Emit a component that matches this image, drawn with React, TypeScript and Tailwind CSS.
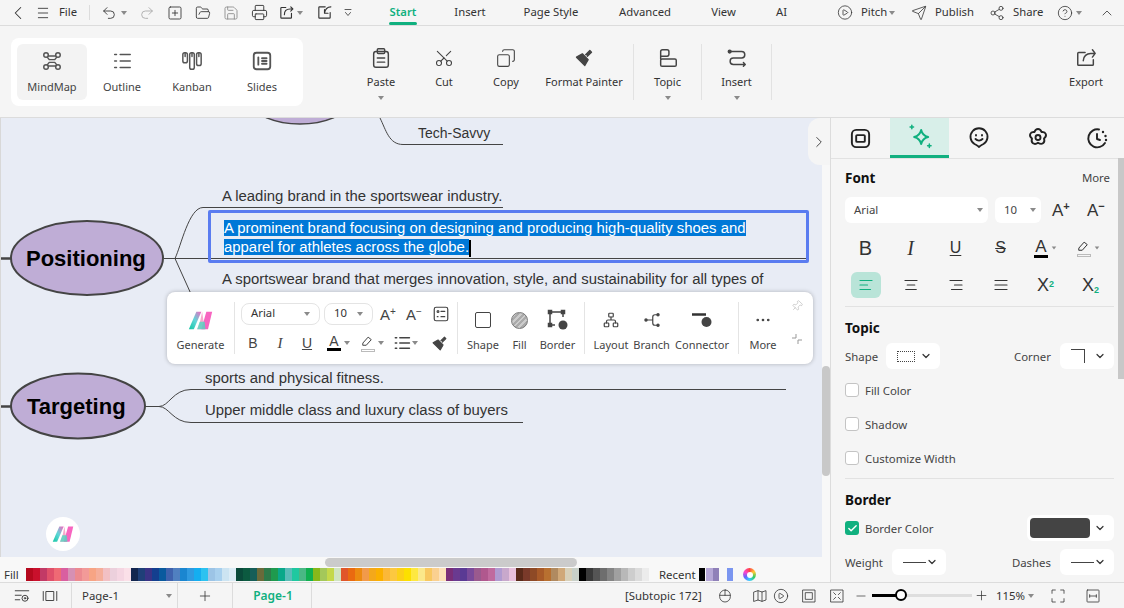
import type { ReactNode } from "react";
import {
  ChevronLeft, ChevronRight, ChevronUp, ChevronDown, Undo2, Redo2, SquarePlus, FolderOpen, Save, Printer,
  CirclePlay, Send, Share2, CircleHelp, Scissors, Copy, Plus, Minus, Check, MoreHorizontal, Pin,
} from "lucide-react";

const reds = ["#b5091e", "#c9102c", "#c23a66", "#e0506a", "#ef6a74", "#d95fa0", "#d690b4", "#ec8a90", "#f29a98", "#f7a484", "#f5ae9a", "#f2c0c4", "#ecd0dc", "#f5d6e2", "#fbe0e8"];
const blues = ["#13264f", "#1f3f78", "#3a3385", "#143f8f", "#0a5a9e", "#3f62ad", "#5080c0", "#1a86d0", "#2f9ae0", "#14aef0", "#2cc2f0", "#9cc4e6", "#a8d0ee", "#cce4f2", "#dcecf6"];
const greens = ["#0a4a3a", "#0c5a40", "#175e58", "#6a6a3a", "#2e7a4a", "#1f9a4e", "#0aa88a", "#5abcb8", "#1fc8a0", "#4ab884", "#10b050", "#88b81a", "#a4c85a", "#c4d84a", "#d0e4c0"];
const oranges = ["#e0552a", "#ea6a10", "#ec8a10", "#f29a4a", "#f4a81a", "#fbb000", "#fbb838", "#fcc840", "#fcd018", "#fce000", "#fee840", "#fbe88a", "#f8c860", "#fad090", "#fce0b8"];
const purples = ["#7a2e78", "#6a3a90", "#5a3a94", "#7a4a9a", "#9a5a8e", "#b0588e", "#c06a9e", "#b09ad0", "#c8a8cc", "#e8c0dc"];
const browns = ["#5a2a1a", "#7a3a2a", "#8e4a26", "#a85a28", "#b87030", "#b08a60", "#d0a878", "#d8d0b8", "#c8d0c8"];
const greys = ["#000000", "#3a3a3a", "#555555", "#6e6e6e", "#858585", "#a0a0a0", "#b8b8b8", "#cdcdcd", "#dcdcdc", "#ececec"];
const palette = [...reds, ...blues, ...greens, ...oranges, ...purples, ...browns, ...greys];

function Ic({ s = 20, children }: { s?: number; children: ReactNode }) {
  return (
    <svg width={s} height={s} viewBox="0 0 24 24" fill="none" stroke="currentColor" strokeWidth="1.6" strokeLinecap="round" strokeLinejoin="round" className="shrink-0">
      {children}
    </svg>
  );
}

function Caret({ className = "" }: { className?: string }) {
  return <span className={`block w-0 h-0 shrink-0 border-x-[3.5px] border-x-transparent border-t-[4px] border-t-[#8a8a8a] ${className}`} />;
}

function Logo({ s = 30, id }: { s?: number; id: string }) {
  return (
    <svg width={s} height={s * 0.8} viewBox="0 0 30 24" className="shrink-0">
      <defs>
        <linearGradient id={id} x1="0" y1="1" x2="1" y2="0">
          <stop offset="0" stopColor="#13c6a3" />
          <stop offset="0.5" stopColor="#5fd6d8" />
          <stop offset="1" stopColor="#f765c0" />
        </linearGradient>
      </defs>
      <polygon points="1,23 10,2 16,2 7,23" fill={`url(#${id})`} />
      <polygon points="11,23 14,16 17,2 20,23" fill="#f7a0c8" opacity="0.9" />
      <polygon points="16,23 22,2 29,2 24,23" fill="#f765c0" />
      <polygon points="11,23 14,14 20,14 21,23" fill="#4fd8c0" opacity="0.8" />
    </svg>
  );
}

function TopBar() {
  return (
    <div className="flex items-center h-[26px] shrink-0 bg-[#f5f5f5] border-b border-[#dcdcdc] text-[11.3px] text-[#333]">
      <div className="w-[36px] flex justify-center"><ChevronLeft size={22} strokeWidth={1.1} /></div>
      <div className="w-[14px] flex justify-center">
        <Ic s={16}><path d="M5 5h14M5 12h14M5 19h14" strokeWidth="1.300" /></Ic>
      </div>
      <span className="ml-[9px] w-[30px]">File</span>
      <span className="w-px h-[15px] bg-[#dcdcdc]" />
      <div className="ml-[7px] w-[24px] flex justify-center"><Undo2 size={16} strokeWidth={1.3} /></div>
      <div className="w-[5px] flex justify-center"><Caret /></div>
      <div className="ml-[7px] w-[28px] flex justify-center text-[#a8a8a8]"><Redo2 size={16} strokeWidth={1.3} /></div>
      <div className="w-[28px] flex justify-center"><SquarePlus size={16} strokeWidth={1.3} /></div>
      <div className="w-[28px] flex justify-center"><FolderOpen size={16} strokeWidth={1.3} /></div>
      <div className="w-[28px] flex justify-center text-[#8a8a8a]"><Save size={16} strokeWidth={1.3} /></div>
      <div className="w-[28px] flex justify-center"><Printer size={17} strokeWidth={1.3} /></div>
      <div className="w-[26px] flex justify-center">
        <Ic s={17}><path d="M19 13v6a1 1 0 0 1-1 1H5a1 1 0 0 1-1-1V6a1 1 0 0 1 1-1h6" /><path d="M9 15c0-5 3-8 8-8h4M18 4l3 3-3 3" /></Ic>
      </div>
      <div className="w-[2px] flex justify-center"><Caret /></div>
      <div className="w-[46px] flex justify-center">
        <Ic s={17}><path d="M20 12v7a1 1 0 0 1-1 1H5a1 1 0 0 1-1-1V5a1 1 0 0 1 1-1h8" /><path d="M21 4c-5 0-8 3-9 9M12 8v5h5" /></Ic>
      </div>
      <div className="w-[2px] flex justify-center">
        <Ic s={12}><path d="M6 5h12M7 11l5 6 5-6" /></Ic>
      </div>

      <div className="ml-[40px] w-[28px] relative h-full flex items-center justify-center">
        <span className="text-[#10b07f] font-semibold">Start</span>
        <span className="absolute bottom-0 left-0 right-0 h-[3px] rounded-sm bg-[#10b07f]" />
      </div>
      <span className="ml-[32px] w-[42px] text-center">Insert</span>
      <span className="ml-[23px] w-[74px] text-center">Page Style</span>
      <span className="ml-[20px] w-[74px] text-center">Advanced</span>
      <span className="ml-[19px] w-[45px] text-center">View</span>
      <span className="ml-[25px] w-[21px] text-center">AI</span>

      <div className="ml-[45px] w-[16px] flex justify-center"><CirclePlay size={17} strokeWidth={1.2} /></div>
      <span className="ml-[8px] w-[26px]">Pitch</span>
      <div className="w-[10px] flex justify-center"><Caret /></div>
      <div className="ml-[14px] w-[16px] flex justify-center"><Send size={16} strokeWidth={1.2} /></div>
      <span className="ml-[8px] w-[39px]">Publish</span>
      <div className="ml-[15px] w-[16px] flex justify-center"><Share2 size={16} strokeWidth={1.2} /></div>
      <span className="ml-[8px] w-[30px]">Share</span>
      <div className="ml-[14px] w-[16px] flex justify-center"><CircleHelp size={16} strokeWidth={1.2} /></div>
      <div className="ml-[1px] w-[10px] flex justify-center"><Caret /></div>
      <div className="ml-[15px] w-[16px] flex justify-center"><ChevronUp size={18} strokeWidth={1.2} /></div>
    </div>
  );
}

function ViewItem({ label, active, children }: { label: string; active?: boolean; children: ReactNode }) {
  return (
    <div className={`w-[70px] h-[56px] rounded-md flex flex-col items-center text-[11px] text-[#444] ${active ? "bg-[#f3f3f3]" : ""}`}>
      <div className="h-[32px] mt-[1px] flex items-center justify-center text-[#555]">{children}</div>
      <span className="mt-[2px]">{label}</span>
    </div>
  );
}

function Tool({ w, label, caret, children }: { w: string; label: string; caret?: boolean; children: ReactNode }) {
  return (
    <div className={`${w} shrink-0 flex flex-col items-center text-[11px] text-[#333]`}>
      <div className="h-[24px] mt-[20px] flex items-center justify-center text-[#444]">{children}</div>
      <span className="mt-[3px] leading-[18px]">{label}</span>
      {caret && <Caret className="mt-[5px]" />}
    </div>
  );
}

function Ribbon() {
  return (
    <div className="flex h-[92px] shrink-0 bg-[#f5f5f5] border-b border-[#dcdcdc]">
      <div className="ml-[11px] mt-[12px] w-[292px] h-[68px] bg-white rounded-lg p-[6px] flex shrink-0">
        <ViewItem label="MindMap" active>
          <Ic s={22}>
            <circle cx="5.500" cy="5.500" r="2.500" /><circle cx="18.500" cy="5.500" r="2.500" /><circle cx="5.500" cy="18.500" r="2.500" /><circle cx="18.500" cy="18.500" r="2.500" />
            <path d="M8 6.500 16 6.500M8 17.500h8M7 8l2 2.500h6l2-2.500M7 16l2-2.500h6l2 2.500" />
          </Ic>
        </ViewItem>
        <ViewItem label="Outline">
          <Ic s={22}><path d="M4 5h2M10 5h11M4 12h2M10 12h11M4 19h2M10 19h11" /></Ic>
        </ViewItem>
        <ViewItem label="Kanban">
          <Ic s={22}><rect x="2" y="3" width="5" height="11" rx="2" /><rect x="9.500" y="3" width="5" height="18" rx="2" /><rect x="17" y="3" width="5" height="14" rx="2" /><path d="M4.500 3v4M12 3v4M19.500 3v4" /></Ic>
        </ViewItem>
        <ViewItem label="Slides">
          <Ic s={22}><rect x="3" y="3" width="18" height="18" rx="3" strokeWidth="2" /><path d="M8 8v8M12 9h5M12 15h5M12 12h5" strokeWidth="2" /></Ic>
        </ViewItem>
      </div>
      <div className="ml-[48px] flex">
        <Tool w="w-[60px]" label="Paste" caret>
          <Ic s={22}><rect x="4" y="5" width="16" height="17" rx="2.500" /><rect x="8" y="2" width="8" height="5" rx="1" /><path d="M8 12h8M8 16.500h8" /></Ic>
        </Tool>
        <Tool w="w-[66px]" label="Cut"><Scissors size={20} strokeWidth={1.3} className="-rotate-90" /></Tool>
        <Tool w="w-[58px]" label="Copy"><Copy size={20} strokeWidth={1.3} className="-scale-x-100" /></Tool>
        <Tool w="w-[98px]" label="Format Painter">
          <Ic s={20}><path d="M3 11l10 10 4-7-7-7z" fill="currentColor" /><path d="M14 8l5-5 2 2-5 5" fill="currentColor" /></Ic>
        </Tool>
        <span className="w-px h-[56px] mt-[18px] bg-[#e2e2e2]" />
        <Tool w="w-[67px]" label="Topic" caret>
          <Ic s={22}><path d="M4 13V5a2 2 0 0 1 2-2h5a2 2 0 0 1 2 2v3a2 2 0 0 1-2 2H4" /><rect x="4" y="13" width="17" height="8" rx="1.500" /></Ic>
        </Tool>
        <span className="w-px h-[56px] mt-[18px] bg-[#e2e2e2]" />
        <Tool w="w-[69px]" label="Insert" caret>
          <Ic s={22}><circle cx="4" cy="5" r="1.500" fill="currentColor" /><path d="M5 5h12a3 3 0 0 1 0 7H8a3 3 0 0 0 0 7h12M19 17l2 2-2 2" /></Ic>
        </Tool>
        <span className="w-px h-[56px] mt-[18px] bg-[#e2e2e2]" />
      </div>
      <div className="ml-auto">
        <Tool w="w-[76px]" label="Export">
          <Ic s={22}><path d="M20 14v5a1 1 0 0 1-1 1H4a1 1 0 0 1-1-1V7a1 1 0 0 1 1-1h7" /><path d="M9 15c0-5 4-8 8-8h5M19 3l3 4-3 4" /></Ic>
        </Tool>
      </div>
    </div>
  );
}

function PopSelect({ w, label }: { w: string; label: string }) {
  return (
    <div className={`${w} h-[22px] px-[9px] flex items-center justify-between border border-[#e4e4e4] rounded-lg text-[11.3px] text-[#333]`}>
      <span className="-mt-[1px]">{label}</span>
      <Caret />
    </div>
  );
}

function PopTool({ w, label, children, className = "" }: { w: string; label: string; children: ReactNode; className?: string }) {
  return (
    <div className={`${w} shrink-0 flex flex-col items-center text-[11px] text-[#444] whitespace-nowrap ${className}`}>
      <div className="h-[22px] mt-[17px] flex items-center justify-center text-[#444]">{children}</div>
      <span className="mt-[6px] leading-[16px]">{label}</span>
    </div>
  );
}

function FloatBar() {
  return (
    <div className="absolute left-[166px] top-[174px] w-[646px] h-[72px] bg-white rounded-lg shadow-[0_0_4px_rgba(0,0,0,0.25)] flex font-['Noto_Sans',sans-serif]">
      <PopTool w="w-[67px]" label="Generate"><Logo s={25} id="gen" /></PopTool>
      <span className="w-px h-[52px] mt-[10px] bg-[#e4e4e4]" />
      <div className="w-[222px] shrink-0 pl-[6px] pt-[11px]">
        <div className="flex items-center h-[22px] text-[#444]">
          <PopSelect w="w-[79px]" label="Arial" />
          <PopSelect w="ml-[4px] w-[49px]" label="10" />
          <span className="ml-[7px] w-[20px] text-[15px] leading-none font-['Liberation_Sans',sans-serif]">A<sup className="text-[10px]">+</sup></span>
          <span className="ml-[6px] w-[20px] text-[15px] leading-none font-['Liberation_Sans',sans-serif]">A<sup className="text-[10px]">−</sup></span>
          <span className="ml-[6px]">
            <Ic s={18}><rect x="3" y="3" width="18" height="18" rx="2.500" /><circle cx="8" cy="8.500" r="1.200" /><path d="M12 8.500h5M7 15.500h1M12 15.500h5" /></Ic>
          </span>
        </div>
        <div className="flex items-center h-[22px] mt-[7px] text-[#444] font-['Liberation_Sans',sans-serif]">
          <span className="ml-[6px] w-[12px] text-center text-[14px]">B</span>
          <span className="ml-[15px] w-[12px] text-center text-[15px] italic font-['Liberation_Serif',serif]">I</span>
          <span className="ml-[15px] w-[12px] text-center text-[14px] underline">U</span>
          <div className="ml-[14px] w-[14px] flex flex-col items-center">
            <span className="text-[14px] leading-[13px]">A</span>
            <span className="w-[14px] h-[3px] bg-black" />
          </div>
          <Caret className="ml-[3px]" />
          <span className="ml-[10px] flex flex-col items-center">
            <Ic s={15}><path d="M5 14l8-9 5 4-8 9H5z" /></Ic>
            <span className="w-[14px] h-[3px] border border-[#bbb]" />
          </span>
          <Caret className="ml-[3px]" />
          <span className="ml-[9px]">
            <Ic s={18}><path d="M9 5h13M9 12h13M9 19h13M3 5h2M3 12h2M3 19h2" strokeWidth="1.800" /></Ic>
          </span>
          <Caret className="ml-[1px]" />
          <span className="ml-[13px]">
            <Ic s={17}><path d="M3 11l10 10 4-7-7-7z" fill="currentColor" /><path d="M14 8l5-5 2 2-5 5" fill="currentColor" /></Ic>
          </span>
        </div>
      </div>
      <span className="w-px h-[52px] mt-[10px] bg-[#e4e4e4]" />
      <PopTool w="w-[50px]" label="Shape"><span className="block w-[16px] h-[16px] border-[1.5px] border-[#444] rounded-[2px]" /></PopTool>
      <PopTool w="w-[23px]" label="Fill"><span className="block w-[17px] h-[17px] rounded-full border border-[#777] bg-[repeating-linear-gradient(135deg,#aaa_0_2px,#ccc_2px_4px)]" /></PopTool>
      <PopTool w="w-[53px]" label="Border">
        <svg width="22" height="22" viewBox="0 0 22 22" fill="none" stroke="#444" strokeWidth="1.500">
          <path d="M3 3h13M3 3v13M3 16h5M16 3v5" />
          <rect x="1.500" y="1.500" width="3" height="3" fill="#444" /><rect x="14.500" y="1.500" width="3" height="3" fill="#444" /><rect x="1.500" y="14.500" width="3" height="3" fill="#444" />
          <circle cx="16" cy="16" r="4.500" fill="#444" stroke="none" />
        </svg>
      </PopTool>
      <span className="w-px h-[52px] mt-[10px] bg-[#e4e4e4]" />
      <PopTool w="ml-[3px] w-[46px]" label="Layout">
        <Ic s={18}><rect x="9" y="3" width="6" height="5" rx="1" /><rect x="3" y="16" width="6" height="5" rx="1" /><rect x="15" y="16" width="6" height="5" rx="1" /><path d="M12 8v4M6 16v-2a2 2 0 0 1 2-2h8a2 2 0 0 1 2 2v2" /></Ic>
      </PopTool>
      <PopTool w="w-[35px]" label="Branch">
        <Ic s={18}><circle cx="4" cy="12" r="1.500" fill="currentColor" /><circle cx="20" cy="5" r="1.500" fill="currentColor" /><circle cx="20" cy="19" r="1.500" fill="currentColor" /><path d="M4 12h8M19 5h-3a3 3 0 0 0-3 3v8a3 3 0 0 0 3 3h3" /></Ic>
      </PopTool>
      <PopTool w="ml-[6px] w-[54px]" label="Connector">
        <svg width="22" height="16" viewBox="0 0 22 16"><path d="M1 2.500h14" stroke="#333" strokeWidth="2.500" fill="none" /><circle cx="15.500" cy="10" r="5" fill="#444" /></svg>
      </PopTool>
      <span className="ml-[9px] w-px h-[52px] mt-[10px] bg-[#e4e4e4]" />
      <PopTool w="w-[48px]" label="More"><MoreHorizontal size={18} strokeWidth={1.6} /></PopTool>
      <div className="w-[20px] flex flex-col items-center text-[#b5b5b5]">
        <span className="mt-[8px]"><Pin size={12} strokeWidth={1.2} className="rotate-45" /></span>
        <svg width="12" height="12" viewBox="0 0 12 12" fill="none" stroke="#999" strokeWidth="1" className="mt-[21px]"><path d="M1 5h4V1M7 11V7h4" /></svg>
      </div>
    </div>
  );
}

function Canvas() {
  return (
    <div className="relative flex-1 bg-[#e8ecf5] overflow-hidden border-l border-[#d8d8d8] font-['Liberation_Sans',sans-serif] text-[#333] text-[14.9px]">
      <svg width="823" height="439" className="absolute left-0 top-0">
        <g fill="none" stroke="#444" strokeWidth="1">
          <path d="M379 0C385 12 388 26.500 402 26.500H502" />
          <path d="M163 140.500H174C180 128 188 89.500 202 89.500H502" />
          <path d="M174 140.500H806" />
          <path d="M174 140.500L190 176" />
          <path d="M144 288.500H158C168 288.500 172 271.500 190 271.500H785" />
          <path d="M158 288.500C168 288.500 172 304.500 190 304.500H522" />
        </g>
        <path d="M0 140.500H10M0 288.500H10" stroke="#444" strokeWidth="2.500" />
        <ellipse cx="299" cy="-14" rx="46" ry="20" fill="#bfadd6" stroke="#444" strokeWidth="1.500" />
        <ellipse cx="86" cy="140" rx="76" ry="37" fill="#bfadd6" stroke="#444" strokeWidth="2" />
        <ellipse cx="77" cy="288" rx="67" ry="32.500" fill="#bfadd6" stroke="#444" strokeWidth="2" />
      </svg>

      <span className="absolute left-[417px] top-[5px] whitespace-nowrap text-[14px]">Tech-Savvy</span>
      <span className="absolute left-[221px] top-[67px] whitespace-nowrap">A leading brand in the sportswear industry.</span>
      <div className="absolute left-[207px] top-[92px] w-[601px] h-[53px] border-[3px] border-[#5a7cf0] rounded-[2px] pl-[13px] pt-[6px] leading-[19px] text-white whitespace-nowrap">
        <span className="bg-[#0078d7]">A prominent brand focusing on designing and producing high-quality shoes and</span>
        <br />
        <span className="bg-[#0078d7]">apparel for athletes across the globe.</span>
        <span className="inline-block w-[1.5px] h-[17px] bg-black align-middle" />
      </div>
      <span className="absolute left-[221px] top-[150px] whitespace-nowrap">A sportswear brand that merges innovation, style, and sustainability for all types of</span>
      <span className="absolute left-[204px] top-[249px] whitespace-nowrap">sports and physical fitness.</span>
      <span className="absolute left-[204px] top-[281px] whitespace-nowrap">Upper middle class and luxury class of buyers</span>

      <span className="absolute left-[25px] top-[127px] text-[22px] font-bold text-black leading-[28px]">Positioning</span>
      <span className="absolute left-[26px] top-[275px] text-[22px] font-bold text-black leading-[28px]">Targeting</span>

      <FloatBar />

      <div className="absolute left-[45px] top-[399px] w-[34px] h-[34px] rounded-full bg-white flex items-center justify-center">
        <Logo s={22} id="fab" />
      </div>
    </div>
  );
}

function PaletteRow() {
  return (
    <div className="relative h-[25px] shrink-0 bg-[#f8f8f8] font-['Noto_Sans',sans-serif] text-[11.4px] text-[#333]">
      <span className="absolute left-[325px] top-[1px] w-[252px] h-[9px] rounded-md bg-[#cbcbcb]" />
      <div className="absolute left-0 top-[10px] right-0 h-[15px] flex items-center">
        <span className="ml-[4px] w-[22px]">Fill</span>
        <div className="flex h-[13px]">
          {palette.map((c, i) => (
            <span key={i} className="block w-[7px] h-full" style={{ backgroundColor: c }} />
          ))}
        </div>
        <span className="ml-[10px] w-[40px]">Recent</span>
        <span className="w-[6px] h-[13px] bg-black" />
        <span className="ml-px w-[7px] h-[13px] bg-[#b5a7d6]" />
        <span className="w-[6px] h-[13px] bg-[#8f80b8]" />
        <span className="ml-[8px] w-[6px] h-[13px] bg-[#7b96f0]" />
        <span className="ml-[10px] w-[13px] h-[13px] rounded-full bg-[conic-gradient(#f44,#fc3,#3c6,#3cf,#66f,#f4c,#f44)] flex items-center justify-center">
          <span className="block w-[6px] h-[6px] rounded-full bg-white" />
        </span>
      </div>
    </div>
  );
}

function Dd({ w, children }: { w: string; children: ReactNode }) {
  return (
    <div className={`${w} h-[26px] bg-white rounded-md flex items-center justify-between pl-[11px] pr-[8px] shrink-0`}>
      {children}
      <ChevronDown size={12} strokeWidth={2.4} className="text-[#333] shrink-0" />
    </div>
  );
}

function CheckRow({ label }: { label: string }) {
  return (
    <div className="h-[34px] flex items-center text-[#444]">
      <span className="w-[14px] h-[14px] bg-white border border-[#c4c4c4] rounded-[3px]" />
      <span className="ml-[6px] mt-[1px]">{label}</span>
    </div>
  );
}

function SidePanel() {
  return (
    <div className="relative w-[294px] shrink-0 bg-[#f5f5f5] border-l border-[#dcdcdc] overflow-hidden font-['Noto_Sans',sans-serif] text-[11.4px] text-[#444]">
      <div className="flex h-[41px] border-b border-[#e2e2e2] text-[#222]">
        <div className="w-[59px] shrink-0 flex items-center justify-center">
          <Ic s={23}><rect x="3" y="3" width="18" height="18" rx="4.500" strokeWidth="2" /><rect x="7.500" y="8.500" width="9" height="7" rx="1" strokeWidth="2" /></Ic>
        </div>
        <div className="w-[59px] shrink-0 h-[40px] flex items-center justify-center bg-[#d8efe9] border-b-[3px] border-[#10b07f] text-[#10b07f]">
          <Ic s={28}><path d="M13 6c.8 3.500 2.500 5.200 6 6-3.500.8-5.200 2.500-6 6-.8-3.500-2.500-5.200-6-6 3.500-.8 5.200-2.500 6-6z" strokeWidth="1.700" /><path d="M5 2v3M3.500 3.500h3M20 18v3M18.500 19.500h3" strokeWidth="1.300" /></Ic>
        </div>
        <div className="w-[59px] shrink-0 flex items-center justify-center">
          <Ic s={24}><path d="M12 21c-1-1.500-2.500-2-4.500-3A8.500 8.500 0 1 1 16.500 18c-2 1-3.500 1.500-4.500 3z" strokeWidth="1.900" /><path d="M9 9v.5M15 9v.5M8.500 13c2 2 5 2 7 0" strokeWidth="1.900" /></Ic>
        </div>
        <div className="w-[59px] shrink-0 flex items-center justify-center">
          <Ic s={24}><path d="M12 3c2 0 3 1.500 3.500 3 1.500-.2 3.500 0 4.300 2 .7 2-.5 3.500-1.800 4.500.5 1.500.8 3.500-1 4.800-1.700 1.200-3.500.4-5-.6-1.300 1-3.200 1.800-5 .6-1.700-1.300-1.500-3.300-1-4.800C4.700 11.500 3.500 10 4.200 8c.8-2 2.800-2.200 4.300-2C9 4.500 10 3 12 3z" strokeWidth="1.900" /><circle cx="12" cy="11.500" r="2.500" strokeWidth="1.900" /></Ic>
        </div>
        <div className="w-[59px] shrink-0 flex items-center justify-center">
          <Ic s={24}><path d="M14 3.500A9 9 0 1 0 20 17" strokeWidth="1.900" /><path d="M12 8v5l3 1" strokeWidth="1.900" /><path d="M18 6v.1M20.500 10v.1M21 14v.1" strokeWidth="2.400" /></Ic>
        </div>
      </div>

      <div className="pl-[14px] pr-[10px]">
        <div className="h-[38px] flex items-center justify-between">
          <span className="text-[13.5px] font-bold text-[#111]">Font</span>
          <span className="mr-[4px] text-[#444]">More</span>
        </div>
        <div className="flex items-center h-[26px]">
          <div className="w-[143px] h-[26px] bg-white rounded-md pl-[9px] pr-[5px] flex items-center justify-between">
            <span>Arial</span><Caret />
          </div>
          <div className="ml-[7px] w-[46px] h-[26px] bg-white rounded-md pl-[9px] pr-[5px] flex items-center justify-between">
            <span>10</span><Caret />
          </div>
          <span className="ml-[11px] w-[22px] text-[17px] leading-none font-['Liberation_Sans',sans-serif] text-[#333]">A<sup className="text-[11px] font-bold">+</sup></span>
          <span className="ml-[13px] w-[22px] text-[17px] leading-none font-['Liberation_Sans',sans-serif] text-[#333]">A<sup className="text-[11px] font-bold">−</sup></span>
        </div>

        <div className="-ml-[2px] mt-[12px] flex items-center h-[26px] font-['Liberation_Sans',sans-serif] text-[#333]">
          <span className="w-[45px] text-center text-[20px]">B</span>
          <span className="w-[45px] text-center text-[20px] italic font-['Liberation_Serif',serif]">I</span>
          <span className="w-[45px] text-center text-[16px] underline underline-offset-2">U</span>
          <span className="w-[45px] text-center text-[16px] line-through">S</span>
          <span className="w-[45px] flex items-center justify-center">
            <span className="flex flex-col items-center">
              <span className="text-[17px] leading-[16px]">A</span>
              <span className="w-[14px] h-[3px] bg-black" />
            </span>
            <Caret className="ml-[3px] scale-75" />
          </span>
          <span className="w-[40px] flex items-center justify-center">
            <span className="flex flex-col items-center">
              <Ic s={15}><path d="M5 14l8-9 5 4-8 9H5z" /></Ic>
              <span className="w-[14px] h-[3px] border border-[#bbb]" />
            </span>
            <Caret className="ml-[3px] scale-75" />
          </span>
        </div>

        <div className="-ml-[2px] mt-[11px] flex items-center h-[26px] font-['Liberation_Sans',sans-serif] text-[#333]">
          <span className="w-[45px] flex justify-center">
            <span className="w-[30px] h-[26px] rounded-md bg-[#b9e4d8] flex items-center justify-center text-[#10b07f]">
              <Ic s={18}><path d="M4 6h16M4 12h10M4 18h14" /></Ic>
            </span>
          </span>
          <span className="w-[45px] flex justify-center"><Ic s={18}><path d="M4 6h16M7 12h10M5 18h14" /></Ic></span>
          <span className="w-[45px] flex justify-center"><Ic s={18}><path d="M4 6h16M10 12h10M6 18h14" /></Ic></span>
          <span className="w-[45px] flex justify-center"><Ic s={18}><path d="M4 6h16M4 12h16M4 18h16" /></Ic></span>
          <span className="w-[45px] text-center text-[18px] leading-none">X<sup className="text-[9px] font-bold text-[#10b07f]">2</sup></span>
          <span className="w-[45px] text-center text-[18px] leading-none">X<sub className="text-[9px] font-bold text-[#10b07f]">2</sub></span>
        </div>

        <div className="mt-[8px] h-px bg-[#e2e2e2]" />
        <div className="pt-[11px] h-[31px] text-[13.5px] font-bold text-[#111] leading-[20px]">Topic</div>
        <div className="mt-[5px] flex items-center h-[26px]">
          <span className="w-[41px] mt-[2px]">Shape</span>
          <Dd w="w-[54px]"><span className="block w-[18px] h-[11px] border border-dotted border-[#444]" /></Dd>
          <span className="ml-auto mr-[9px] mt-[2px]">Corner</span>
          <Dd w="w-[54px]"><span className="block w-[14px] h-[14px] border-t border-r border-[#444]" /></Dd>
        </div>
        <div className="mt-[4px]">
          <CheckRow label="Fill Color" />
          <CheckRow label="Shadow" />
          <CheckRow label="Customize Width" />
        </div>
        <div className="mt-[3px] h-px bg-[#e2e2e2]" />
        <div className="pt-[11px] h-[31px] text-[13.5px] font-bold text-[#111] leading-[20px]">Border</div>
        <div className="mt-[5px] flex items-center h-[26px]">
          <span className="w-[14px] h-[14px] rounded-[3px] bg-[#10b07f] flex items-center justify-center">
            <Check size={11} strokeWidth={3} className="text-white" />
          </span>
          <span className="ml-[6px] mt-[2px]">Border Color</span>
          <div className="ml-auto w-[87px] h-[26px] bg-white rounded-md flex items-center pl-[3px] pr-[8px] justify-between">
            <span className="w-[60px] h-[20px] rounded-[4px] bg-[#444]" />
            <ChevronDown size={12} strokeWidth={2.4} className="text-[#333]" />
          </div>
        </div>
        <div className="mt-[8px] flex items-center h-[26px]">
          <span className="w-[47px] mt-[2px]">Weight</span>
          <Dd w="w-[54px]"><span className="block w-[24px] h-px bg-[#444]" /></Dd>
          <span className="ml-auto mr-[9px] mt-[2px]">Dashes</span>
          <Dd w="w-[54px]"><span className="block w-[24px] h-px bg-[#444]" /></Dd>
        </div>
      </div>

      <span className="absolute right-0 top-[40px] w-[6px] h-[221px] bg-[#c8c8c8]" />
    </div>
  );
}

function StatusBar() {
  return (
    <div className="flex items-center h-[26px] shrink-0 bg-[#f5f5f5] border-t border-[#dcdcdc] text-[11.4px] text-[#333]">
      <div className="w-[42px] flex justify-center pl-[2px]">
        <Ic s={18}><path d="M3 5h18M3 11h8M3 17h6" strokeWidth="1.200" /><circle cx="16" cy="15" r="4" strokeWidth="1.200" /><circle cx="16" cy="15" r="1" strokeWidth="1.200" /></Ic>
      </div>
      <div className="w-[16px] flex justify-center">
        <Ic s={18}><path d="M3 6v12M21 6v12" strokeWidth="1.200" /><rect x="7" y="6" width="10" height="12" strokeWidth="1.200" /></Ic>
      </div>
      <span className="ml-[13px] w-px h-[25px] bg-[#dcdcdc]" />
      <span className="ml-[10px] w-[84px]">Page-1</span>
      <Caret />
      <span className="ml-[5px] w-px h-[25px] bg-[#dcdcdc]" />
      <div className="w-[54px] flex justify-center"><Plus size={16} strokeWidth={1.2} /></div>
      <span className="w-px h-[25px] bg-[#dcdcdc]" />
      <span className="w-[78px] pl-[2px] text-center text-[12px] font-semibold text-[#10b07f]">Page-1</span>
      <span className="w-px h-[25px] bg-[#dcdcdc]" />
      <span className="ml-[313px] w-[79px] whitespace-nowrap">[Subtopic 172]</span>
      <div className="ml-[13px] w-[16px] flex justify-center">
        <Ic s={16}><rect x="4" y="3" width="16" height="18" rx="8" strokeWidth="1.200" /><path d="M4 11h16M12 3v8" strokeWidth="1.200" /></Ic>
      </div>
      <div className="ml-[19px] w-[16px] flex justify-center">
        <Ic s={16}><path d="M3 6l6-2 6 2 6-2v14l-6 2-6-2-6 2zM9 4v14M15 6v14" strokeWidth="1.200" /></Ic>
      </div>
      <div className="ml-[5px] w-[16px] flex justify-center"><CirclePlay size={16} strokeWidth={1.2} /></div>
      <div className="ml-[12px] w-[16px] flex justify-center">
        <Ic s={16}><path d="M3 3h18v18H3z" strokeWidth="1.200" /><rect x="7" y="7" width="10" height="10" strokeWidth="1.200" /></Ic>
      </div>
      <div className="ml-[12px] w-[16px] flex justify-center">
        <Ic s={16}><path d="M3 3h18v18H3zM7 7l3 3M17 7l-3 3M7 17l3-3M17 17l-3-3" strokeWidth="1.200" /></Ic>
      </div>
      <div className="ml-[8px] w-[16px] flex justify-center"><Minus size={14} strokeWidth={1.2} /></div>
      <div className="ml-[3px] relative w-[100px] h-[3px] bg-[#dedede]">
        <span className="absolute left-0 top-0 h-[3px] w-[29px] bg-black" />
        <span className="absolute left-[23px] -top-[5px] w-[12px] h-[12px] rounded-full bg-white border-[2px] border-black" />
      </div>
      <div className="ml-[1px] w-[16px] flex justify-center"><Plus size={15} strokeWidth={1.2} /></div>
      <span className="ml-[7px] w-[30px] whitespace-nowrap">115%</span>
      <Caret className="ml-[2px]" />
      <div className="ml-[16px] w-[16px] flex justify-center">
        <Ic s={16}><path d="M3 8V3h5M16 3h5v5M21 16v5h-5M8 21H3v-5" strokeWidth="1.200" /></Ic>
      </div>
      <div className="ml-[19px] w-[16px] flex justify-center">
        <Ic s={16}><rect x="3" y="3" width="18" height="18" rx="1" strokeWidth="1.200" /><path d="M7 12h10M7 10v4M17 10v4" strokeWidth="1.200" /></Ic>
      </div>
    </div>
  );
}

export default function App() {
  return (
    <div className="w-[1124px] h-[608px] flex flex-col overflow-hidden bg-[#f5f5f5] font-['Noto_Sans',sans-serif]">
      <TopBar />
      <Ribbon />
      <div className="flex flex-1 min-h-0">
        <div className="relative w-[830px] shrink-0 flex flex-col">
          <div className="flex flex-1 min-h-0">
            <Canvas />
            <div className="relative w-[8px] shrink-0 bg-[#f8f8f8]">
              <span className="absolute left-0 right-0 top-[248px] h-[110px] rounded-md bg-[#c8c8c8]" />
            </div>
          </div>
          <PaletteRow />
          <div className="absolute right-0 top-0 w-[22px] h-[47px] bg-[#f5f5f5] rounded-tl-xl rounded-bl-xl flex items-center justify-center text-[#444]">
            <ChevronRight size={18} strokeWidth={1.3} />
          </div>
        </div>
        <SidePanel />
      </div>
      <StatusBar />
    </div>
  );
}
